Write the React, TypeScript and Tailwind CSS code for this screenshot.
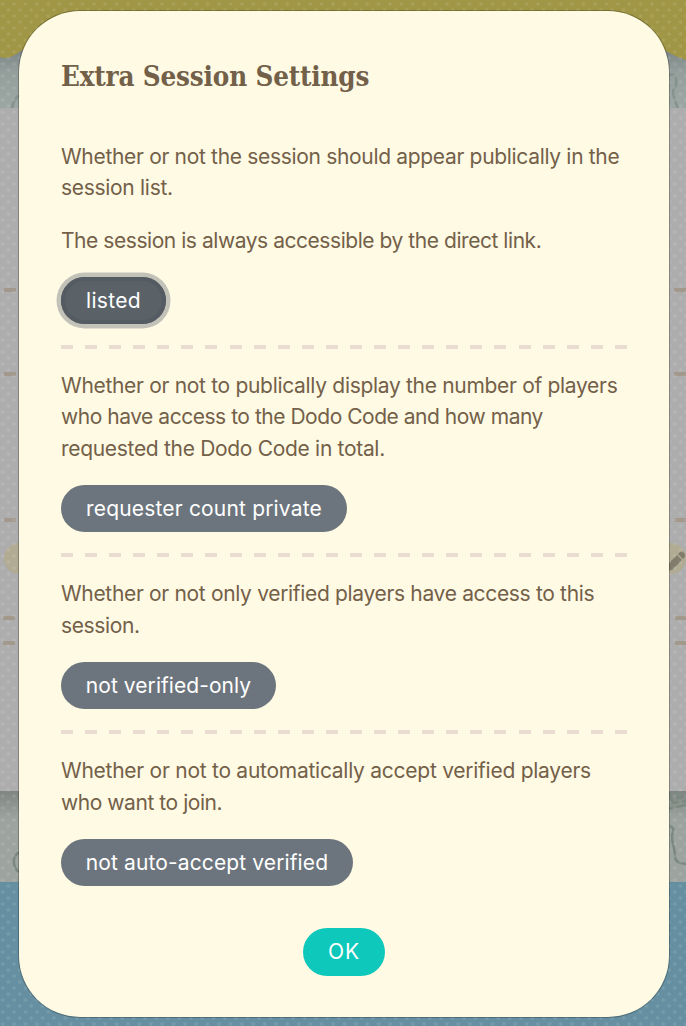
import React from "react";

const dots =
  "bg-[radial-gradient(circle_at_center,rgba(255,255,255,0.10)_0_1.4px,transparent_2.1px),radial-gradient(circle_at_center,rgba(255,255,255,0.10)_0_1.4px,transparent_2.1px)] bg-[size:11.4px_12px] bg-[position:-3px_-2px,2.7px_4px]";

function Dashes() {
  return (
    <div className="h-1 w-[566px] bg-[repeating-linear-gradient(90deg,#ebdcd1_0_12px,transparent_12px_24.08px)]" />
  );
}

function Line({ t, c }: { t: string; c: string }) {
  return (
    <span className="block h-[31.5px]">
      <span className={"whitespace-nowrap " + c}>{t}</span>
    </span>
  );
}

function Pill({ t, w, c, active }: { t: string; w: string; c: string; active?: boolean }) {
  return (
    <button
      className={
        "flex h-[47px] items-center justify-center rounded-full text-[21px] text-white " +
        w +
        (active
          ? " bg-[#5a6268] pt-0.5 shadow-[inset_0_0_0_4px_#545b62,0_0_0_4.5px_#c2c2b9]"
          : " bg-[#6c757d]")
      }
    >
      <span className={"whitespace-nowrap " + c}>{t}</span>
    </button>
  );
}

function Mark({ c }: { c: string }) {
  return <i className={"absolute h-1 w-3 bg-[#a3988c] " + c} />;
}

function Backdrop() {
  return (
    <div className="absolute inset-0 flex flex-col bg-[#9da5a0]">
      <div className="relative h-[108px] bg-[linear-gradient(#7e8888_52px,#949e9b_72px,#9ba6a2_100px)]">
        <svg className="absolute inset-0" width="686" height="108">
          <path d="M0 0H686V60Q674 56 664 50H22Q14 57 5 58L0 57Z" fill="#a09645" />
          <path d="M19 95Q13 101 12 108M667 76q8-4 9 3t-2 10 4 19" fill="none" stroke="#84938e" strokeWidth="2.5" />
        </svg>
      </div>
      <div className="relative h-[683px] bg-[#adadad]">
        <Mark c="left-1 top-[180px]" />
        <Mark c="left-1 top-[264px]" />
        <Mark c="left-1 top-[410px]" />
        <Mark c="left-[3px] top-[508px]" />
        <Mark c="left-[3px] top-[533px]" />
        <Mark c="left-[674px] top-[180px]" />
        <Mark c="left-[674px] top-[264px]" />
        <Mark c="left-[674px] top-[410px]" />
        <Mark c="left-[675px] top-[508px]" />
        <Mark c="left-[675px] top-[533px]" />
        <i className="absolute left-1 top-[435px] size-[31px] rounded-full bg-[#b1ab94]" />
        <i className="absolute left-[655px] top-[435px] size-[31px] rounded-full bg-[#b1ab94]" />
        <svg className="absolute left-[665px] top-[443px]" width="21" height="22" viewBox="0 0 21 22">
          <path d="M2 20V14L12 4L17 9L7 19Z M13 3L15 1Q16 0 18 1L20 3Q21 5 20 6L18 8Z" fill="#817c6c" />
        </svg>
      </div>
      <div className="relative h-[91px] bg-[linear-gradient(#7f8581,#9da49f_28px)]">
        <svg className="absolute inset-0" width="686" height="91">
          <path d="M20 61Q13 64 14 72T20 81M669 1l4 11 13-2M667 18l19-4M667 34q8 2 6 7t0 12 2 13 11 7M675 0l3 7 8-2" fill="none" stroke="#7b8880" strokeWidth="2.5" />
        </svg>
      </div>
      <div className="h-[144px] bg-[#6690a1]" />
      <div className={"absolute inset-0 " + dots} />
    </div>
  );
}

export default function App() {
  return (
    <div className="relative h-[1026px] w-[686px] overflow-hidden pl-[18px] pt-[10px] font-['Inter',sans-serif]">
      <Backdrop />
      <main className="relative flex h-[1008px] w-[652px] flex-col rounded-[62px] border border-black/25 bg-[#fffae4] bg-clip-padding pl-[42px] text-[21px] leading-[31.5px] text-[#736049]">
        <h1 className="mt-[47px] h-[36px] whitespace-nowrap font-['DejaVu_Serif_Condensed','DejaVu_Serif',serif] text-[27.5px] font-bold leading-[36px] tracking-[-0.16px]">
          Extra Session Settings
        </h1>
        <p className="mt-[46.5px]">
          <Line t="Whether or not the session should appear publically in the" c="tracking-[-0.32px]" />
          <Line t="session list." c="tracking-[-0.3px]" />
        </p>
        <p className="mt-[21px]">
          <Line t="The session is always accessible by the direct link." c="tracking-[-0.45px]" />
        </p>
        <div className="mt-[20.5px]"><Pill t="listed" w="w-[105px]" c="tracking-[0.3px]" active /></div>
        <div className="mt-[21px]"><Dashes /></div>
        <p className="mt-[21px]">
          <Line t="Whether or not to publically display the number of players" c="tracking-[-0.31px]" />
          <Line t="who have access to the Dodo Code and how many" c="tracking-[-0.47px]" />
          <Line t="requested the Dodo Code in total." c="tracking-[-0.31px]" />
        </p>
        <div className="mt-[21px]"><Pill t="requester count private" w="w-[286px]" c="tracking-[0.17px]" /></div>
        <div className="mt-[21px]"><Dashes /></div>
        <p className="mt-[21px]">
          <Line t="Whether or not only verified players have access to this" c="tracking-[-0.33px]" />
          <Line t="session." c="tracking-[-0.38px]" />
        </p>
        <div className="mt-[21px]"><Pill t="not verified-only" w="w-[215px]" c="tracking-[0.06px]" /></div>
        <div className="mt-[21px]"><Dashes /></div>
        <p className="mt-[21px]">
          <Line t="Whether or not to automatically accept verified players" c="tracking-[-0.26px]" />
          <Line t="who want to join." c="tracking-[-0.44px]" />
        </p>
        <div className="mt-[21px]"><Pill t="not auto-accept verified" w="w-[292px]" c="tracking-[0.12px]" /></div>
        <div className="mt-[42px] pl-[242px]">
          <button className="h-[48px] w-[82px] rounded-full bg-[#0ec8bb] tracking-[0.9px] text-white">OK</button>
        </div>
      </main>
    </div>
  );
}
